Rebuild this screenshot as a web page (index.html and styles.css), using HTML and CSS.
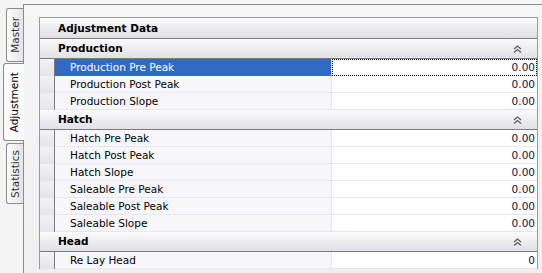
FILE: index.html
```html
<!DOCTYPE html>
<html lang="en">
<head>
  <meta charset="UTF-8">
  <title>Adjustment Data</title>
  <link rel="stylesheet" href="styles.css">
</head>
<body>
  <div class="window">

    <!-- vertical tabs -->
    <div class="tabs">
      <div class="tab tab-master"><span>Master</span></div>
      <div class="tab tab-active"><span>Adjustment</span></div>
      <div class="tab tab-stats"><span>Statistics</span></div>
    </div>

    <!-- tab page with the property grid -->
    <div class="page">
      <div class="grid">
        <div class="grid-header">Adjustment Data</div>

        <div class="category">
          <span>Production</span>
          <svg class="collapse" width="9" height="8" viewBox="0 0 9 8"><path d="M1 4 L4.5 1 L8 4 M1 7.5 L4.5 4.5 L8 7.5" fill="none" stroke="#5a5a5a" stroke-width="1.2"/></svg>
        </div>
        <div class="row selected"><div class="indent"></div><div class="name">Production Pre Peak</div><div class="value">0.00</div></div>
        <div class="row"><div class="indent"></div><div class="name">Production Post Peak</div><div class="value">0.00</div></div>
        <div class="row"><div class="indent"></div><div class="name">Production Slope</div><div class="value">0.00</div></div>

        <div class="category">
          <span>Hatch</span>
          <svg class="collapse" width="9" height="8" viewBox="0 0 9 8"><path d="M1 4 L4.5 1 L8 4 M1 7.5 L4.5 4.5 L8 7.5" fill="none" stroke="#5a5a5a" stroke-width="1.2"/></svg>
        </div>
        <div class="row"><div class="indent"></div><div class="name">Hatch Pre Peak</div><div class="value">0.00</div></div>
        <div class="row"><div class="indent"></div><div class="name">Hatch Post Peak</div><div class="value">0.00</div></div>
        <div class="row"><div class="indent"></div><div class="name">Hatch Slope</div><div class="value">0.00</div></div>
        <div class="row"><div class="indent"></div><div class="name">Saleable Pre Peak</div><div class="value">0.00</div></div>
        <div class="row"><div class="indent"></div><div class="name">Saleable Post Peak</div><div class="value">0.00</div></div>
        <div class="row"><div class="indent"></div><div class="name">Saleable Slope</div><div class="value">0.00</div></div>

        <div class="category">
          <span>Head</span>
          <svg class="collapse" width="9" height="8" viewBox="0 0 9 8"><path d="M1 4 L4.5 1 L8 4 M1 7.5 L4.5 4.5 L8 7.5" fill="none" stroke="#5a5a5a" stroke-width="1.2"/></svg>
        </div>
        <div class="row"><div class="indent"></div><div class="name">Re Lay Head</div><div class="value">0</div></div>
      </div>
    </div>

  </div>
</body>
</html>
```

FILE: styles.css
```css
html, body {
  margin: 0;
  padding: 0;
}
body {
  font-family: "DejaVu Sans", Verdana, sans-serif;
  font-size: 10.5px;
  color: #000;
  background-color: #f4f4f4;
  width: 542px;
  height: 273px;
  overflow: hidden;
}
.window {
  display: flex;
  height: 273px;
}

/* tabs */
.tabs {
  width: 23px;
  flex-shrink: 0;
  display: flex;
  flex-direction: column;
  padding-top: 8px;
  box-sizing: border-box;
}
.tab {
  margin-left: 6px;
  width: 17px;
  border: 1px solid #8c8c8c;
  border-right: none;
  border-radius: 3px 0 0 3px;
  background: linear-gradient(to right, #fdfdfd, #e4e4e8);
  display: flex;
  align-items: center;
  justify-content: center;
  box-sizing: border-box;
  color: #333;
}
.tab span {
  writing-mode: vertical-rl;
  transform: rotate(180deg);
  white-space: nowrap;
}
.tab-master {
  height: 54px;
}
.tab-active {
  margin-left: 3px;
  width: 21px;
  height: 78px;
  margin-top: 1px;
  margin-right: -1px;
  background: #fbfbfb;
  position: relative;
  z-index: 1;
  color: #000;
}
.tab-stats {
  height: 61px;
  margin-top: 2px;
}

/* page */
.page {
  flex: 1;
  margin-top: 4px;
  border-top: 1px solid #8c8c8c;
  border-left: 1px solid #8c8c8c;
  background: linear-gradient(#f5f5f5, #f0f0f0);
  padding: 12px 4px 0 15px;
}

/* property grid */
.grid {
  border: 1px solid #9a9a9a;
  border-bottom: none;
  background: #fff;
}
.grid-header {
  height: 20px;
  line-height: 20px;
  padding-left: 18px;
  font-weight: bold;
  background: linear-gradient(#fbfbfd, #dedee4);
  border-bottom: 1px solid #7d7d7d;
}
.category {
  height: 19px;
  line-height: 19px;
  padding-left: 18px;
  padding-right: 15px;
  font-weight: bold;
  background: linear-gradient(#fbfbfd, #e0e0e6);
  border-bottom: 1px solid #7d7d7d;
  display: flex;
  justify-content: space-between;
  align-items: center;
}
.row {
  display: flex;
  height: 17px;
  line-height: 16px;
}
.indent {
  width: 14px;
  flex-shrink: 0;
  background: linear-gradient(#f2f2f6, #e4e4ea);
  border-right: 1px solid #7d7d7d;
}
.name {
  width: 261px;
  flex-shrink: 0;
  padding-left: 15px;
  background: #f7f7fb;
  border-bottom: 1px solid #e6e6ee;
  border-right: 1px solid #e6e6ee;
  white-space: nowrap;
}
.value {
  flex: 1;
  text-align: right;
  padding-right: 2px;
  border-bottom: 1px solid #e6e6ee;
  color: #10103a;
}
.selected .name {
  background: #316ac5;
  color: #fff;
  border-bottom-color: #316ac5;
}
.selected .value {
  outline: 1px dotted #000;
  outline-offset: -1px;
}
```
